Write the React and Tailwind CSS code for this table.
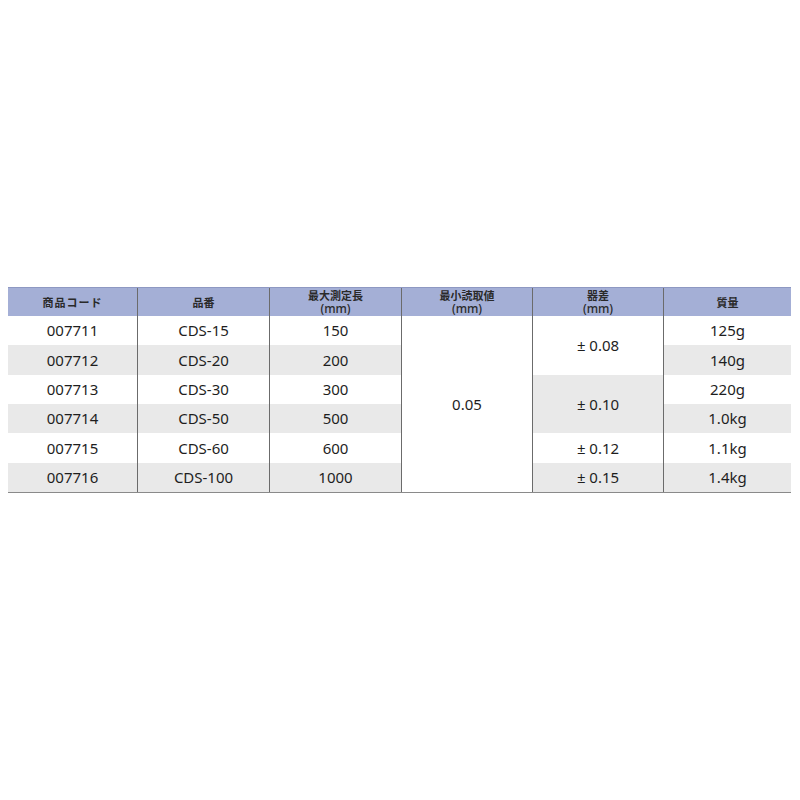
import React from 'react';

const rows = [
  { code: '007711', part: 'CDS-15', len: '150', mass: '125g' },
  { code: '007712', part: 'CDS-20', len: '200', mass: '140g' },
  { code: '007713', part: 'CDS-30', len: '300', mass: '220g' },
  { code: '007714', part: 'CDS-50', len: '500', mass: '1.0kg' },
  { code: '007715', part: 'CDS-60', len: '600', mass: '1.1kg' },
  { code: '007716', part: 'CDS-100', len: '1000', mass: '1.4kg' },
];

const errors = [
  { value: '± 0.08', tall: true, bg: 'bg-white' },
  { value: '± 0.10', tall: true, bg: 'bg-[#e9e9e9]' },
  { value: '± 0.12', tall: false, bg: 'bg-white' },
  { value: '± 0.15', tall: false, bg: 'bg-[#e9e9e9]' },
];

const line = 'border-l border-[#6b6b6b]';

function Head({ children, first }) {
  return (
    <div
      className={`flex flex-col items-center justify-center text-[11px] font-bold text-[#2a2a2a] ${first ? '' : line}`}
    >
      {children}
    </div>
  );
}

// unit line under the header title, a bit lighter than the title
function Unit() {
  return (
    <span
      className="block h-[14px] leading-[14px] text-[12px] font-medium"
      style={{ fontFamily: '"Noto Sans", sans-serif' }}
    >
      (mm)
    </span>
  );
}

function Title({ children }) {
  return <span className="block h-[14px] leading-[14px]">{children}</span>;
}

function Cell({ children, stripe, first }) {
  return (
    <div
      className={`flex flex-1 items-center justify-center ${stripe ? 'bg-[#e9e9e9]' : 'bg-white'} ${first ? '' : line}`}
    >
      {children}
    </div>
  );
}

export default function App() {
  return (
    <div className="w-[800px] h-[800px] bg-white pt-[287px] pl-2">
      <div
        className="w-[783px] text-[#1e1e1e] border-b border-[#8a8a8a]"
        style={{ fontFamily: '"Noto Sans", "Noto Sans CJK JP", sans-serif' }}
      >
        <div
          className="grid grid-cols-[129px_132px_132px_131px_131px_128px] h-[29px] bg-[#a4afd6] border-t border-[#8e98c2]"
          style={{ fontFamily: '"Noto Sans CJK JP", sans-serif' }}
        >
          <Head first>
            <Title>
              <span className="tracking-[1px]">商品コード</span>
            </Title>
          </Head>
          <Head>
            <Title>品番</Title>
          </Head>
          <Head>
            <Title>最大測定長</Title>
            <Unit />
          </Head>
          <Head>
            <Title>最小読取値</Title>
            <Unit />
          </Head>
          <Head>
            <Title>器差</Title>
            <Unit />
          </Head>
          <Head>
            <Title>質量</Title>
          </Head>
        </div>

        <div className="grid grid-cols-[129px_132px_132px_131px_131px_128px] grid-rows-[repeat(6,29.33px)] text-[15px]">
          {rows.map((r, i) => (
            <React.Fragment key={r.code}>
              <div style={{ gridRow: i + 1, gridColumn: 1 }} className="flex">
                <Cell first stripe={i % 2 === 1}>
                  {r.code}
                </Cell>
              </div>
              <div style={{ gridRow: i + 1, gridColumn: 2 }} className="flex">
                <Cell stripe={i % 2 === 1}>{r.part}</Cell>
              </div>
              <div style={{ gridRow: i + 1, gridColumn: 3 }} className="flex">
                <Cell stripe={i % 2 === 1}>{r.len}</Cell>
              </div>
              <div style={{ gridRow: i + 1, gridColumn: 6 }} className="flex">
                <Cell stripe={i % 2 === 1}>{r.mass}</Cell>
              </div>
            </React.Fragment>
          ))}

          <div className={`col-start-4 row-start-1 row-span-6 flex items-center justify-center bg-white ${line}`}>
            0.05
          </div>

          <div className={`col-start-5 row-start-1 row-span-6 flex flex-col ${line}`}>
            {errors.map((e) => (
              <div
                key={e.value}
                className={`flex items-center justify-center ${e.bg} ${e.tall ? 'h-[58.66px]' : 'h-[29.33px]'}`}
              >
                {e.value}
              </div>
            ))}
          </div>
        </div>
      </div>
    </div>
  );
}
